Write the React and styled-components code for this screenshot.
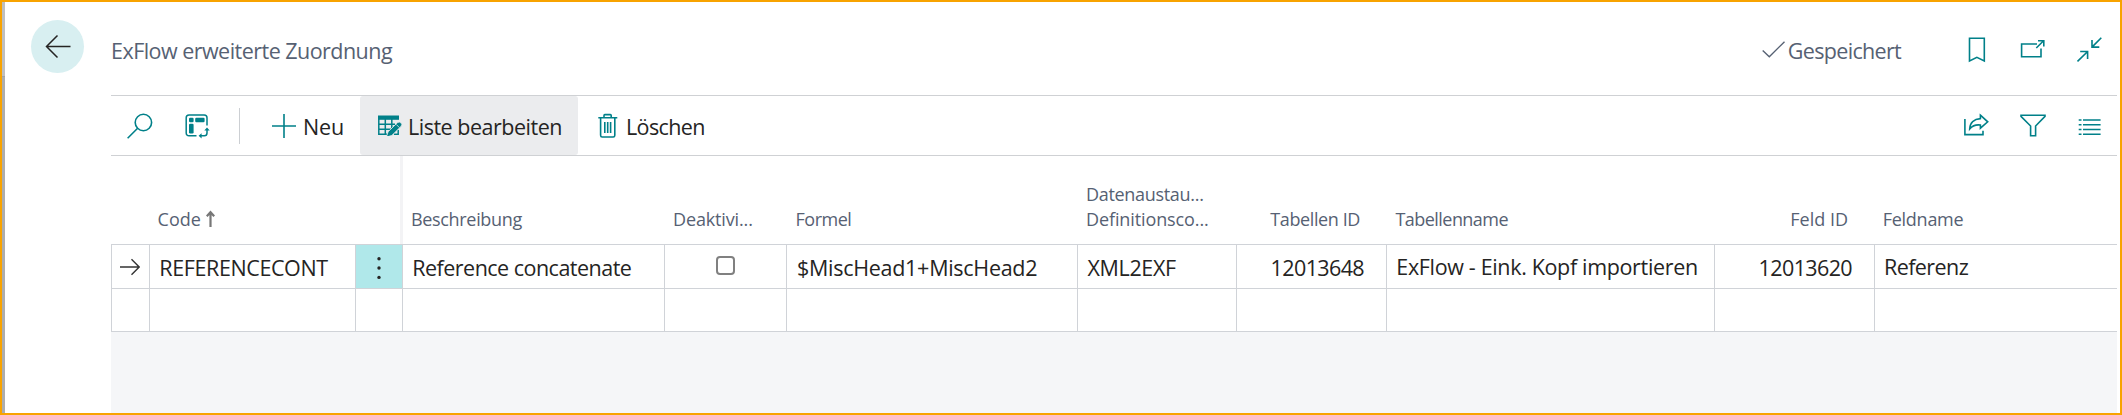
import React from "react";
import styled, { createGlobalStyle } from "styled-components";

const teal = "#008089";
const line = "#d0d3d8";

const GlobalStyle = createGlobalStyle`
  *, *::before, *::after { box-sizing: border-box; }
  body { margin: 0; background: #fff; font-family: "Open Sans", "Noto Sans", sans-serif; }
  button { font: inherit; color: inherit; background: none; border: 0; padding: 0; }
`;

const Frame = styled.div`
  display: flex;
  width: 2122px;
  height: 415px;
  border: 2px solid #f8a300;
  background: #fff;
  padding-right: 3px;
`;

const Edge = styled.div`
  width: 3px;
  background: linear-gradient(#bfbfbf 0 74px, #a3a3a3 74px 75px, #adadad 75px);
`;

const Side = styled.div`
  width: 106px;
  padding: 18px 0 0 26px;
`;

const BackButton = styled.button`
  display: block;
  width: 53px;
  height: 53px;
  border-radius: 50%;
  background: #d8eff1;
`;

const Main = styled.main`
  flex: 1;
  min-width: 0;
  display: flex;
  flex-direction: column;
`;

const Label = styled.span`
  font-size: 21.5px;
  line-height: 30px;
  white-space: nowrap;
  letter-spacing: ${(p) => p.$track || 0}px;
`;

const Header = styled.header`
  display: flex;
  height: 93px;
  color: #566173;
`;

const Title = styled(Label).attrs({ as: "h1" })`
  margin: 34px auto 0 0;
  font-weight: 400;
`;

const Status = styled.div`
  display: flex;
  gap: 2px;
  padding-top: 34px;
  margin-right: 60px;
`;

const HeaderTools = styled.div`
  display: flex;
  gap: 26px;
  padding: 32px 8px 0 0;
`;

const Svg = styled.svg`
  display: block;
  flex: none;
  fill: none;
  stroke: ${(p) => p.$color || teal};
  stroke-width: ${(p) => p.$weight || 1.6};
`;

const Toolbar = styled.div`
  display: flex;
  height: 61px;
  border: solid #cfd1d4;
  border-width: 1px 0;
`;

const IconButton = styled.button`
  width: ${(p) => p.$width || 57}px;
  display: flex;
  align-items: center;
  justify-content: center;
`;

const Divider = styled.div`
  width: 1px;
  height: 36px;
  margin: 12px 20px 0 14px;
  background: #cccfd3;
`;

const Action = styled.button`
  display: flex;
  align-items: center;
  width: ${(p) => p.$width}px;
  padding-left: ${(p) => p.$inset}px;
  gap: ${(p) => p.$gap}px;
  color: #252423;
  border-radius: 3px;
  background: ${(p) => (p.$active ? "#ebecee" : "transparent")};
  ${Label} { margin-top: 3px; }
`;

const EndTools = styled.div`
  display: flex;
  align-items: center;
  gap: 26px;
  margin-left: auto;
  padding-right: 8px;
`;

const Row = styled.div`
  display: grid;
  grid-template-columns: 38px 206px 47px 262px 122px 291px 159px 150px 328px 160px 1fr;
  flex: none;
  height: ${(p) => p.$height}px;
`;

const HeadCell = styled.div`
  display: flex;
  flex-direction: ${(p) => (p.$stacked ? "column" : "row")};
  align-items: ${(p) => (p.$stacked ? "flex-start" : "flex-end")};
  justify-content: ${(p) => (p.$stacked || p.$right ? "flex-end" : "flex-start")};
  gap: ${(p) => (p.$stacked ? 0 : 5)}px;
  padding: 0 ${(p) => p.$right || 0}px 12px ${(p) => (p.$right ? 0 : p.$left)}px;
  ${(p) => p.$frozen && "border-right: 3px solid #f3f3f5; margin-right: -1px;"}
`;

const HeadLabel = styled(Label)`
  font-size: 18px;
  line-height: 25px;
  color: #566173;
`;

const Cell = styled.div`
  display: flex;
  padding: ${(p) => p.$top ?? 8}px ${(p) => p.$right || 0}px 0 ${(p) => p.$left || 0}px;
  justify-content: ${(p) => (p.$right ? "flex-end" : "flex-start")};
  border-left: 1px solid ${line};
  border-top: 1px solid ${line};
  background: ${(p) => (p.$selected ? "#b0e8ea" : "#fff")};
  color: #252423;
`;

const Checkbox = styled.span`
  width: 19px;
  height: 19px;
  border: 2px solid #808080;
  border-radius: 4px;
`;

const Filler = styled.div`
  flex: 1;
  border-top: 1px solid ${line};
  background: #f5f6f8;
`;

const Icon = ({ box, children, ...rest }) => {
  const [, , w, h] = box.split(" ");
  return (
    <Svg viewBox={box} width={w} height={h} aria-hidden="true" {...rest}>
      {children}
    </Svg>
  );
};

const BackIcon = () => (
  <Icon box="0 0 53 53" $color="#252423" $weight={1.5}>
    <path d="M39.5 26.5H15.5M26.5 15.5L15.5 26.5L26.5 37.5" />
  </Icon>
);
const CheckIcon = () => (
  <Icon box="0 0 24 30" $color="#566173" $weight={1.4}>
    <path d="M.7 14.5L7.3 20.7L22.5 5.7" />
  </Icon>
);
const BookmarkIcon = () => (
  <Icon box="0 0 32 32">
    <path d="M8.5 4.2H23.3V27L15.9 23.4L8.5 27Z" />
  </Icon>
);
const PopoutIcon = () => (
  <Icon box="0 0 32 32">
    <path d="M18 10H2.6V22.7H22V14.6M17.3 14L24.6 6.8M19 6.8H24.8V12.6" />
  </Icon>
);
const CollapseIcon = () => (
  <Icon box="0 0 32 32">
    <path d="M24.3 3.8L15 13.1M15 6V13.1H22.3M.5 27.5L10.4 17.7M3.2 17.5H10.6V25" />
  </Icon>
);
const SearchIcon = () => (
  <Icon box="0 0 28 28">
    <circle cx="17.4" cy="10.5" r="8.2" />
    <path d="M11.6 16.3L1.6 26.3" />
  </Icon>
);
const LayoutIcon = () => (
  <Icon box="0 0 26 26" $weight={1.5}>
    <path d="M12.5 22.8H5C3.2 22.8 2.2 21.7 2.2 20V4.8C2.2 3.1 3.2 2 5 2H20.2C22 2 23 3.1 23 4.8V12.5" />
    <g fill={teal} stroke="none">
      <rect x="5" y="4.7" width="4.6" height="4.6" rx="1.2" />
      <rect x="11.2" y="4.7" width="9.4" height="4.6" rx="1.2" />
      <rect x="5" y="10.8" width="4.6" height="9.6" rx="1.2" />
    </g>
    <path d="M23 16V20C23 21.7 22 22.8 20.4 22.8H16" />
    <path d="M20.3 17.4L23 14.4L25.7 17.4ZM17.6 20.2L14.6 22.8L17.6 25.4Z" fill={teal} stroke="none" />
  </Icon>
);
const PlusIcon = () => (
  <Icon box="0 0 24 24">
    <path d="M0 12H24M12 0V24" />
  </Icon>
);
const EditListIcon = () => (
  <Icon box="0 0 25 21" $weight={1.5}>
    <path d="M.8 1V19.3H10M.8 9.2H17M.8 14.3H13M7.3 4V19.3M13.8 4V13" />
    <path d="M0 .5H21V4.8H0Z" fill={teal} stroke="none" />
    <path d="M16 19.3H20.2V15" />
    <path d="M8.6 21.4L10.1 16.8L19.3 7.8Q21.3 6.2 23 7.8Q24.6 9.6 23 11.4L13.9 20.4L8.6 22Z" fill={teal} stroke="#ebecee" strokeWidth=".8" />
    <path d="M18.2 9.4L21.4 12.6" stroke="#ebecee" strokeWidth=".8" />
  </Icon>
);
const TrashIcon = () => (
  <Icon box="0 0 20 26">
    <path d="M.3 4.8H19.3M6 4.6V2.4Q6 1.6 6.8 1.6H12.4Q13.2 1.6 13.2 2.4V4.6M2.6 5V22.3Q2.6 24 4.2 24H15.2Q16.8 24 16.8 22.3V5M6.8 9V20M9.7 9V20M12.6 9V20" />
  </Icon>
);
const ShareIcon = () => (
  <Icon box="0 0 32 32">
    <path d="M3.9 9V24.6H22V20.8" />
    <path d="M19.4 5.2L26.7 11.8L19.4 18.2V15C14.5 14.4 11.5 15.6 8.7 18.9C8.9 13 13 9 19.4 8.6Z" />
  </Icon>
);
const FilterIcon = () => (
  <Icon box="0 0 32 32">
    <path d="M2 5.3H26V6.4L16.6 16V25.8H11.6V16L2 6.4Z" />
  </Icon>
);
const ListIcon = () => (
  <Icon box="0 0 32 32">
    <path d="M1.7 10H4.5M1.7 14.8H4.5M1.7 19.5H4.5M1.7 24.3H4.5M6 10H23.6M6 14.8H23.6M6 19.5H23.6M6 24.3H23.6" />
  </Icon>
);
const SortIcon = () => (
  <Icon box="0 0 9 25" $color="#777" $weight={2.2}>
    <path d="M4.5 20V5M.8 9.2L4.5 5.2L8.2 9.2" />
  </Icon>
);
const RowArrowIcon = () => (
  <Icon box="0 0 20 18" $color="#333" $weight={1.4}>
    <path d="M0 9H19M11.5 1.3L19.2 9L11.5 16.7" />
  </Icon>
);
const MoreIcon = () => (
  <Icon box="0 0 6 24" $color="none">
    <g fill="#252423">
      <circle cx="3" cy="2.7" r="1.7" />
      <circle cx="3" cy="12" r="1.7" />
      <circle cx="3" cy="21.4" r="1.7" />
    </g>
  </Icon>
);

export default function App() {
  return (
    <>
      <GlobalStyle />
      <Frame>
        <Edge />
        <Side>
          <BackButton aria-label="Zurück"><BackIcon /></BackButton>
        </Side>
        <Main>
          <Header>
            <Title $track={-0.53}>ExFlow erweiterte Zuordnung</Title>
            <Status>
              <CheckIcon />
              <Label $track={-0.68}>Gespeichert</Label>
            </Status>
            <HeaderTools>
              <BookmarkIcon />
              <PopoutIcon />
              <CollapseIcon />
            </HeaderTools>
          </Header>
          <Toolbar>
            <IconButton><SearchIcon /></IconButton>
            <IconButton><LayoutIcon /></IconButton>
            <Divider />
            <Action $width={100} $inset={12} $gap={7}>
              <PlusIcon />
              <Label $track={-0.15}>Neu</Label>
            </Action>
            <Action $width={218} $inset={18} $gap={5} $active>
              <EditListIcon />
              <Label $track={-0.49}>Liste bearbeiten</Label>
            </Action>
            <Action $width={150} $inset={20} $gap={8}>
              <TrashIcon />
              <Label $track={-0.62}>Löschen</Label>
            </Action>
            <EndTools>
              <ShareIcon />
              <FilterIcon />
              <ListIcon />
            </EndTools>
          </Toolbar>

          <Row $height={88}>
            <HeadCell />
            <HeadCell $left={8.5}>
              <HeadLabel $track={0.05}>Code</HeadLabel>
              <SortIcon />
            </HeadCell>
            <HeadCell $frozen />
            <HeadCell $left={9}><HeadLabel $track={-0.33}>Beschreibung</HeadLabel></HeadCell>
            <HeadCell $left={9}><HeadLabel $track={-0.14}>Deaktivi...</HeadLabel></HeadCell>
            <HeadCell $left={9.5}><HeadLabel $track={-0.48}>Formel</HeadLabel></HeadCell>
            <HeadCell $left={9} $stacked>
              <HeadLabel $track={-0.31}>Datenaustau...</HeadLabel>
              <HeadLabel $track={-0.11}>Definitionsco...</HeadLabel>
            </HeadCell>
            <HeadCell $right={26}><HeadLabel $track={-0.4}>Tabellen ID</HeadLabel></HeadCell>
            <HeadCell $left={9.5}><HeadLabel $track={-0.55}>Tabellenname</HeadLabel></HeadCell>
            <HeadCell $right={26}><HeadLabel>Feld ID</HeadLabel></HeadCell>
            <HeadCell $left={8.7}><HeadLabel $track={-0.26}>Feldname</HeadLabel></HeadCell>
          </Row>

          <Row $height={44}>
            <Cell $left={8} $top={12.5}><RowArrowIcon /></Cell>
            <Cell $left={9.3}><Label $track={-0.39}>REFERENCECONT</Label></Cell>
            <Cell $left={20} $top={11} $selected><MoreIcon /></Cell>
            <Cell $left={9.2}><Label $track={-0.51}>Reference concatenate</Label></Cell>
            <Cell $left={51} $top={11}><Checkbox /></Cell>
            <Cell $left={10}><Label $track={-0.28}>$MiscHead1+MiscHead2</Label></Cell>
            <Cell $left={9.5}><Label $track={-0.36}>XML2EXF</Label></Cell>
            <Cell $right={22}><Label $track={-0.62}>12013648</Label></Cell>
            <Cell $left={9.3} $top={7}><Label $track={-0.34}>ExFlow - Eink. Kopf importieren</Label></Cell>
            <Cell $right={22}><Label $track={-0.62}>12013620</Label></Cell>
            <Cell $left={9} $top={7}><Label $track={-0.58}>Referenz</Label></Cell>
          </Row>
          <Row $height={43}>
            {Array.from({ length: 11 }, (_, i) => <Cell key={i} />)}
          </Row>
          <Filler />
        </Main>
      </Frame>
    </>
  );
}
